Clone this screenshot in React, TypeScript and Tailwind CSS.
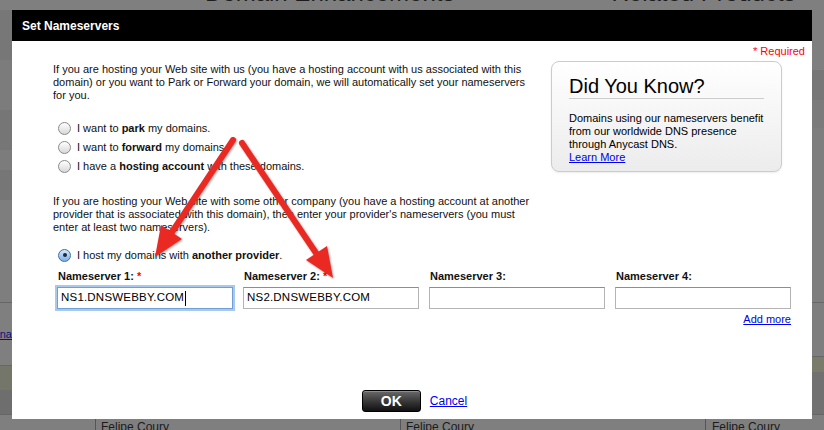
import React from "react";

function Radio({ checked = false }: { checked?: boolean }) {
  if (checked) {
    return (
      <span className="w-[13px] h-[13px] rounded-full border border-[#3d6da8] bg-gradient-to-b from-[#d6e8fa] to-[#7fb0e8] flex items-center justify-center shrink-0">
        <span className="w-[4px] h-[4px] rounded-full bg-[#1d2a3a]" />
      </span>
    );
  }
  return (
    <span className="w-[13px] h-[13px] rounded-full border border-[#8a8a8a] bg-gradient-to-b from-white to-[#d8d8d8] shrink-0" />
  );
}

function RadioRow({ h, checked, children }: { h: string; checked?: boolean; children: React.ReactNode }) {
  return (
    <div className={`flex items-center ${h} pl-[5px] gap-[6px]`}>
      <Radio checked={checked} />
      <span>{children}</span>
    </div>
  );
}

function Field({ label, required, value, focused }: { label: string; required?: boolean; value?: string; focused?: boolean }) {
  return (
    <div className="flex flex-col">
      <div className="font-bold leading-[13px] pl-[1px]">
        {label} {required && <span className="text-[#ff0000]">*</span>}
      </div>
      <div
        className={
          focused
            ? "mt-[4px] h-[22px] border border-[#6f9fd6] shadow-[0_0_0_2px_#a8c8ee] bg-white flex items-center px-[3px] text-[11.5px] tracking-[0.2px] text-black"
            : "mt-[4px] h-[22px] border border-[#b4b4b4] border-t-[#8e8e8e] bg-white flex items-center px-[3px] text-[11.5px] tracking-[0.2px] text-black"
        }
      >
        {value}
        {focused && <span className="ml-[1px] w-px h-[15px] bg-black" />}
      </div>
    </div>
  );
}

export default function App() {
  return (
    <div className="relative w-[824px] h-[430px] overflow-hidden bg-[#7f7f7f] font-['Liberation_Sans',Arial,sans-serif]">
      {/* dimmed page behind */}
      <div className="h-[10px] overflow-hidden bg-[#7f7f7f] text-[#1c1c1c] text-[24px] leading-[24px]">
        <div className="flex -mt-[19px]">
          <span className="ml-[205px]">Domain Enhancements</span>
          <span className="ml-[157px]">Related Products</span>
        </div>
      </div>
      <div className="flex justify-between h-[405px]">
        <div className="w-[12px] flex flex-col overflow-hidden">
          <div className="h-[50px] bg-[#777777]" />
          <div className="h-[50px] bg-[#7c7c7c]" />
          <div className="h-[40px] bg-[#767676]" />
          <div className="h-[20px] bg-[#7c7c7c]" />
          <div className="h-[30px] bg-[#767676]" />
          <div className="h-[103px] bg-[#7e7e7e] border-b border-[#666666]" />
          <div className="h-[63px] bg-[#7f7f7f] border-b border-[#666666] flex items-center justify-end">
            <span className="text-[11px] text-[#10107a] underline whitespace-nowrap">Mana</span>
          </div>
          <div className="h-[24px] bg-[#75766a]" />
          <div className="h-[25px] bg-[#6e6e6e] border-b border-[#666666]" />
        </div>
        <div className="w-[12px] flex flex-col">
          <div className="h-[60px] bg-[#7f7f7f]" />
          <div className="h-[30px] bg-[#777777]" />
          <div className="h-[28px] bg-[#7b7b7b]" />
          <div className="h-[175px] bg-[#7e7e7e] border-b border-[#666666]" />
          <div className="h-[54px] bg-[#7e7e7e] border-b border-[#666666]" />
          <div className="h-[15px] bg-[#7a7b68]" />
          <div className="h-[43px] bg-[#717171] border-b border-[#666666]" />
        </div>
      </div>
      <div className="flex h-[15px] text-[12px] text-[#1b1b1b] leading-[15px]">
        <div className="w-[95px]" />
        <div className="w-[305px] border-l border-[#555555] pl-[5px] pt-[5px]">Felipe Coury</div>
        <div className="w-[305px] border-l border-[#555555] pl-[5px] pt-[5px]">Felipe Coury</div>
        <div className="flex-1 border-l border-[#555555] pl-[6px] pt-[5px]">Felipe Coury</div>
      </div>

      {/* modal */}
      <div className="absolute left-[12px] top-[10px] w-[800px] h-[409px] bg-white flex flex-col text-[11px] text-[#111111]">
        <div className="h-[31px] bg-black flex items-center pl-[10px] text-white font-bold text-[12px]">Set Nameservers</div>

        <div className="flex flex-col pl-[41px] pr-[21px]">
          <div className="text-right text-[#ff0000] leading-[13px] mt-[4px] -mr-[14px]">* Required</div>

          <div className="flex mt-[3px]">
            <div className="flex flex-col pt-[2px]">
              <p className="leading-[13px]">
                If you are hosting your Web site with us (you have a hosting account with us associated with this
                <br />
                domain) or you want to Park or Forward your domain, we will automatically set your nameservers
                <br />
                for you.
              </p>
              <div className="mt-[16px]">
                <RadioRow h="h-[20px]">
                  I want to <b>park</b> my domains.
                </RadioRow>
                <RadioRow h="h-[19px]">
                  I want to <b>forward</b> my domains.
                </RadioRow>
                <RadioRow h="h-[19px]">
                  I have a <b>hosting account</b> with these domains.
                </RadioRow>
              </div>
            </div>

            <div className="ml-auto mr-[9px] w-[231px] h-[111px] rounded-[8px] border border-[#cccccc] bg-gradient-to-b from-white to-[#ececec] px-[17px] pt-[13px] shadow-[0_1px_2px_rgba(0,0,0,0.08)]">
              <div className="text-[20px] leading-[22px] text-black pb-[1px] border-b border-[#cccccc]">Did You Know?</div>
              <div className="mt-[13px] leading-[13px] text-black">
                Domains using our nameservers benefit from our worldwide DNS presence through Anycast DNS.
                <br />
                <span className="text-[#0000ee] underline">Learn More</span>
              </div>
            </div>
          </div>

          <p className="mt-[19px] leading-[13px]">
            If you are hosting your Web site with some other company (you have a hosting account at another
            <br />
            provider that is associated with this domain), then enter your provider's nameservers (you must
            <br />
            enter at least two nameservers).
          </p>

          <div className="mt-[11px]">
            <RadioRow h="h-[20px]" checked>
              I host my domains with <b>another provider</b>.
            </RadioRow>
          </div>

          <div className="grid grid-cols-4 gap-[10px] pl-[4px] mt-[5px]">
            <Field label="Nameserver 1:" required value="NS1.DNSWEBBY.COM" focused />
            <Field label="Nameserver 2:" required value="NS2.DNSWEBBY.COM" />
            <Field label="Nameserver 3:" />
            <Field label="Nameserver 4:" />
          </div>

          <div className="text-right leading-[13px] mt-[4px]">
            <span className="text-[#0000ee] underline">Add more</span>
          </div>
        </div>

        <div className="mt-auto mb-[7px] flex justify-center items-center gap-[9px] pl-[5px]">
          <div className="w-[59px] h-[22px] rounded-[3px] border border-black bg-gradient-to-b from-[#6a6a6a] via-[#3a3a3a] to-[#111111] flex items-center justify-center text-white font-bold text-[14px] shadow-[inset_0_1px_0_rgba(255,255,255,0.25)]">
            OK
          </div>
          <span className="text-[12px] text-[#0000ee] underline">Cancel</span>
        </div>
      </div>

      {/* red arrows drawn on the screenshot */}
      <svg className="absolute inset-0 pointer-events-none drop-shadow-[1px_1px_1px_rgba(0,0,0,0.35)]" width="824" height="430" viewBox="0 0 824 430">
        <line x1="233" y1="140" x2="172" y2="232" stroke="#ea2a22" strokeWidth="6" strokeLinecap="round" />
        <polygon points="155,257 182,239 161,225" fill="#ea2a22" />
        <line x1="242" y1="143" x2="316" y2="253" stroke="#ea2a22" strokeWidth="6" strokeLinecap="round" />
        <polygon points="333,278 327,246 306,260" fill="#ea2a22" />
      </svg>
    </div>
  );
}
